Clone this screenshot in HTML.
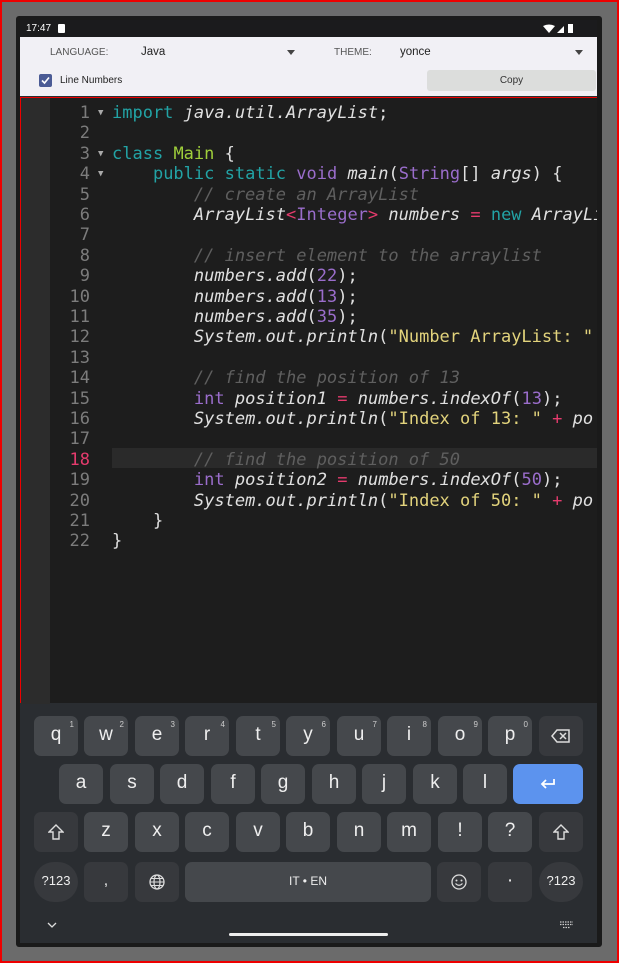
<!DOCTYPE html>
<html><head><meta charset="utf-8"><style>
*{margin:0;padding:0;box-sizing:border-box}
body{width:619px;height:963px;overflow:hidden;background:#6b6b6b;position:relative;font-family:"Liberation Sans",sans-serif}
.outer{position:absolute;left:0;top:0;width:619px;height:963px;border:2px solid #e00;}
.dev{position:absolute;left:16px;top:16px;width:586px;height:931px;background:#1a1a1a;border-radius:3px}
.scr{position:absolute;left:20px;top:20px;width:577px;height:923px;background:#2a2d31;overflow:hidden}
.sb{position:absolute;left:0;top:0;width:577px;height:17px;background:#1b1b1d;color:#fff;font-size:10px}
.tb{position:absolute;left:0;top:17px;width:577px;height:59px;background:#f1f0f5}
.lbl{position:absolute;font-size:10px;color:#555}
.val{position:absolute;font-size:11.5px;color:#222}
.arr{position:absolute;width:0;height:0;border-left:4px solid transparent;border-right:4px solid transparent;border-top:5px solid #444}
.ed{position:absolute;left:0;top:77px;width:577px;height:606px;background:#1d1d1d;border-left:1px solid #e00;border-top:1px solid #e00}
.gut{position:absolute;left:0;top:0;width:29px;height:606px;background:#2c2c2c}
.code{position:absolute;left:0;top:5px;width:577px;font-family:"DejaVu Sans Mono",monospace;font-size:17px;line-height:20.4px;color:#e0e0e0;white-space:pre}
.ln{position:absolute;left:30px;width:39px;text-align:right;color:#7c7c7c}
.fold{position:absolute;left:77px;font-size:9px;color:#aaa}
.tx{position:absolute;left:91px}
.k{color:#22a3a5}.p{color:#9a6dcb}.g{color:#9fcf3b}.s{color:#e2d37c}.c{color:#5f5f5f;font-style:italic}.i{font-style:italic}.r{color:#e53b6d}
.hl{position:absolute;left:91px;width:490px;height:20px;background:#2a2a2a}
.key{position:absolute;width:44px;height:40px;background:#45484c;border-radius:7px;color:#eee;font-size:19px;text-align:center;line-height:38px}
.key.d{background:#37393d}
.key sup{position:absolute;right:4px;top:-10px;font-size:8px;color:#ccc}
</style></head><body>
<div class="outer"></div>
<div class="dev"></div>
<div class="scr">
 <div class="sb"><span style="position:absolute;left:6px;top:3px">17:47</span><div style="position:absolute;left:38px;top:4px;width:7px;height:9px;background:#fff;border-radius:1px"></div>
 <svg style="position:absolute;left:523px;top:4px" width="36" height="10"><path d="M0 2 Q6 -1 12 2 L6 9Z" fill="#fff"/><path d="M14 9 L21 2 L21 9Z" fill="#fff"/><rect x="25" y="0" width="5" height="9" fill="#fff"/></svg></div>
 <div class="tb">
  <div class="lbl" style="left:30px;top:10px">LANGUAGE:</div>
  <div class="val" style="left:121px;top:9px">Java</div>
  <div class="arr" style="left:267px;top:13px"></div>
  <div class="lbl" style="left:314px;top:10px">THEME:</div>
  <div class="val" style="left:380px;top:9px">yonce</div>
  <div class="arr" style="left:555px;top:13px"></div>
  <div style="position:absolute;left:19px;top:37px;width:13px;height:13px;background:#4b5b95;border-radius:2px"><svg width="13" height="13"><path d="M3 6.5 L5.5 9 L10 3.5" stroke="#fff" stroke-width="1.6" fill="none"/></svg></div>
  <div class="lbl" style="left:40px;top:38px;color:#222">Line Numbers</div>
  <div style="position:absolute;left:407px;top:33px;width:169px;height:21px;background:#dcdddc;border-radius:3px;font-size:10px;color:#333;text-align:center;line-height:21px">Copy</div>
 </div>
 <div class="ed">
  <div class="gut"></div>
  <div class="hl" style="top:350px"></div>
  <div class="code">
<div class="ln" style="top:0">1</div><div class="fold" style="top:0">▼</div><div class="tx" style="top:0"><span class="k">import</span> <span class="i">java.util.ArrayList</span>;</div>
<div class="ln" style="top:20.4px">2</div>
<div class="ln" style="top:40.8px">3</div><div class="fold" style="top:40.8px">▼</div><div class="tx" style="top:40.8px"><span class="k">class</span> <span class="g">Main</span> {</div>
<div class="ln" style="top:61.2px">4</div><div class="fold" style="top:61.2px">▼</div><div class="tx" style="top:61.2px">    <span class="k">public</span> <span class="k">static</span> <span class="p">void</span> <span class="i">main</span>(<span class="p">String</span>[] <span class="i">args</span>) {</div>
<div class="ln" style="top:81.6px">5</div><div class="tx c" style="top:81.6px">        // create an ArrayList</div>
<div class="ln" style="top:102px">6</div><div class="tx" style="top:102px">        <span class="i">ArrayList</span><span class="r">&lt;</span><span class="p">Integer</span><span class="r">&gt;</span> <span class="i">numbers</span> <span class="r">=</span> <span class="k">new</span> <span class="i">ArrayList</span></div>
<div class="ln" style="top:122.4px">7</div>
<div class="ln" style="top:142.8px">8</div><div class="tx c" style="top:142.8px">        // insert element to the arraylist</div>
<div class="ln" style="top:163.2px">9</div><div class="tx" style="top:163.2px">        <span class="i">numbers.add</span>(<span class="p">22</span>);</div>
<div class="ln" style="top:183.6px">10</div><div class="tx" style="top:183.6px">        <span class="i">numbers.add</span>(<span class="p">13</span>);</div>
<div class="ln" style="top:204px">11</div><div class="tx" style="top:204px">        <span class="i">numbers.add</span>(<span class="p">35</span>);</div>
<div class="ln" style="top:224.4px">12</div><div class="tx" style="top:224.4px">        <span class="i">System.out.println</span>(<span class="s">"Number ArrayList: "</span></div>
<div class="ln" style="top:244.8px">13</div>
<div class="ln" style="top:265.2px">14</div><div class="tx c" style="top:265.2px">        // find the position of 13</div>
<div class="ln" style="top:285.6px">15</div><div class="tx" style="top:285.6px">        <span class="p">int</span> <span class="i">position1</span> <span class="r">=</span> <span class="i">numbers.indexOf</span>(<span class="p">13</span>);</div>
<div class="ln" style="top:306px">16</div><div class="tx" style="top:306px">        <span class="i">System.out.println</span>(<span class="s">"Index of 13: "</span> <span class="r">+</span> <span class="i">po</span></div>
<div class="ln" style="top:326.4px">17</div>
<div class="ln r" style="top:346.8px">18</div><div class="tx c" style="top:346.8px">        // find the position of 50</div>
<div class="ln" style="top:367.2px">19</div><div class="tx" style="top:367.2px">        <span class="p">int</span> <span class="i">position2</span> <span class="r">=</span> <span class="i">numbers.indexOf</span>(<span class="p">50</span>);</div>
<div class="ln" style="top:387.6px">20</div><div class="tx" style="top:387.6px">        <span class="i">System.out.println</span>(<span class="s">"Index of 50: "</span> <span class="r">+</span> <span class="i">po</span></div>
<div class="ln" style="top:408px">21</div><div class="tx" style="top:408px">    }</div>
<div class="ln" style="top:428.4px">22</div><div class="tx" style="top:428.4px">}</div>
  </div>
 </div>
 <div class="key" style="left:14px;top:696px">q<sup>1</sup></div>
 <div class="key" style="left:64px;top:696px">w<sup>2</sup></div>
 <div class="key" style="left:115px;top:696px">e<sup>3</sup></div>
 <div class="key" style="left:165px;top:696px">r<sup>4</sup></div>
 <div class="key" style="left:216px;top:696px">t<sup>5</sup></div>
 <div class="key" style="left:266px;top:696px">y<sup>6</sup></div>
 <div class="key" style="left:317px;top:696px">u<sup>7</sup></div>
 <div class="key" style="left:367px;top:696px">i<sup>8</sup></div>
 <div class="key" style="left:418px;top:696px">o<sup>9</sup></div>
 <div class="key" style="left:468px;top:696px">p<sup>0</sup></div>
 <div class="key d" style="left:519px;top:696px"><svg width="20" height="14" style="margin-top:13px"><path d="M6 1 H18 V13 H6 L1 7Z" stroke="#ddd" stroke-width="1.5" fill="none"/><path d="M9 4 L15 10 M15 4 L9 10" stroke="#ddd" stroke-width="1.5"/></svg></div>
 <div class="key" style="left:39px;top:744px">a</div>
 <div class="key" style="left:90px;top:744px">s</div>
 <div class="key" style="left:140px;top:744px">d</div>
 <div class="key" style="left:191px;top:744px">f</div>
 <div class="key" style="left:241px;top:744px">g</div>
 <div class="key" style="left:292px;top:744px">h</div>
 <div class="key" style="left:342px;top:744px">j</div>
 <div class="key" style="left:393px;top:744px">k</div>
 <div class="key" style="left:443px;top:744px">l</div>
 <div class="key" style="left:493px;top:744px;width:70px;background:#5c93ee"><svg width="16" height="12" style="margin-top:14px"><path d="M14 1 V6 H2 M6 2 L2 6 L6 10" stroke="#fff" stroke-width="1.8" fill="none"/></svg></div>
 <div class="key d" style="left:14px;top:792px"><svg width="16" height="16" style="margin-top:12px"><path d="M8 1 L15 8 H11 V15 H5 V8 H1Z" stroke="#ddd" stroke-width="1.4" fill="none"/></svg></div>
 <div class="key" style="left:64px;top:792px">z</div>
 <div class="key" style="left:115px;top:792px">x</div>
 <div class="key" style="left:165px;top:792px">c</div>
 <div class="key" style="left:216px;top:792px">v</div>
 <div class="key" style="left:266px;top:792px">b</div>
 <div class="key" style="left:317px;top:792px">n</div>
 <div class="key" style="left:367px;top:792px">m</div>
 <div class="key" style="left:418px;top:792px">!</div>
 <div class="key" style="left:468px;top:792px">?</div>
 <div class="key d" style="left:519px;top:792px"><svg width="16" height="16" style="margin-top:12px"><path d="M8 1 L15 8 H11 V15 H5 V8 H1Z" stroke="#ddd" stroke-width="1.4" fill="none"/></svg></div>
 <div class="key d" style="left:14px;top:842px;border-radius:20px;font-size:13px">?123</div>
 <div class="key d" style="left:64px;top:842px;font-size:15px">,</div>
 <div class="key d" style="left:115px;top:842px"><svg width="16" height="16" style="margin-top:12px"><circle cx="8" cy="8" r="7" stroke="#ddd" stroke-width="1.3" fill="none"/><ellipse cx="8" cy="8" rx="3" ry="7" stroke="#ddd" stroke-width="1.2" fill="none"/><path d="M1 8 H15 M2 4.5 H14 M2 11.5 H14" stroke="#ddd" stroke-width="1.1"/></svg></div>
 <div class="key" style="left:165px;top:842px;width:246px;font-size:12px">IT • EN</div>
 <div class="key d" style="left:417px;top:842px"><svg width="16" height="16" style="margin-top:12px"><circle cx="8" cy="8" r="7" stroke="#ddd" stroke-width="1.3" fill="none"/><circle cx="5.5" cy="6.5" r="1" fill="#ddd"/><circle cx="10.5" cy="6.5" r="1" fill="#ddd"/><path d="M4.5 9.5 Q8 13 11.5 9.5" stroke="#ddd" stroke-width="1.2" fill="none"/></svg></div>
 <div class="key d" style="left:468px;top:842px">·</div>
 <div class="key d" style="left:519px;top:842px;border-radius:20px;font-size:13px">?123</div>
 <svg style="position:absolute;left:27px;top:902px" width="10" height="7"><path d="M1 1 L5 5 L9 1" stroke="#ddd" stroke-width="1.3" fill="none"/></svg>
 <svg style="position:absolute;left:540px;top:901px" width="13" height="8"><path d="M0 1 H13 M0 3.5 H13 M3 6.5 H10" stroke="#ccc" stroke-width="1.2" stroke-dasharray="1.5 1"/></svg>
 <div style="position:absolute;left:209px;top:913px;width:159px;height:3px;background:#eee;border-radius:2px"></div>
</div>
</body></html>
